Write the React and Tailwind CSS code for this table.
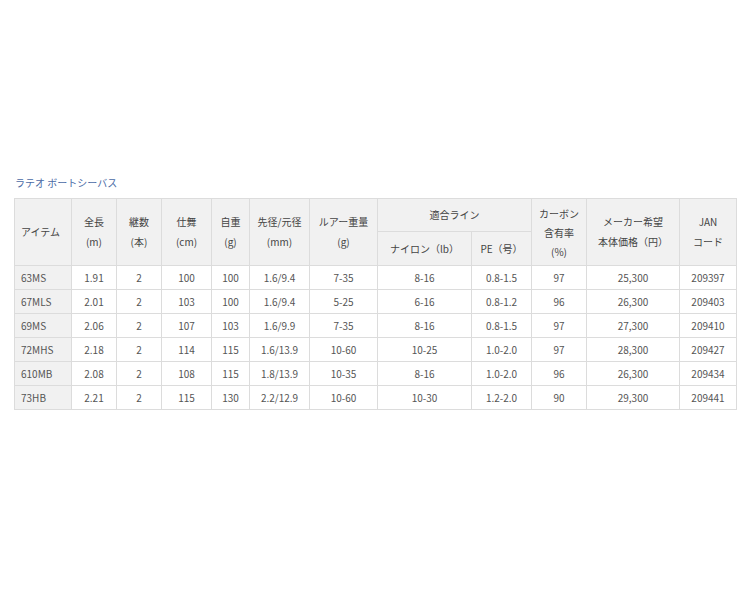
import React from 'react'

const rows = [
  ['63MS', '1.91', '2', '100', '100', '1.6/9.4', '7-35', '8-16', '0.8-1.5', '97', '25,300', '209397'],
  ['67MLS', '2.01', '2', '103', '100', '1.6/9.4', '5-25', '6-16', '0.8-1.2', '96', '26,300', '209403'],
  ['69MS', '2.06', '2', '107', '103', '1.6/9.9', '7-35', '8-16', '0.8-1.5', '97', '27,300', '209410'],
  ['72MHS', '2.18', '2', '114', '115', '1.6/13.9', '10-60', '10-25', '1.0-2.0', '97', '28,300', '209427'],
  ['610MB', '2.08', '2', '108', '115', '1.8/13.9', '10-35', '8-16', '1.0-2.0', '96', '26,300', '209434'],
  ['73HB', '2.21', '2', '115', '130', '2.2/12.9', '10-60', '10-30', '1.2-2.0', '90', '29,300', '209441'],
]

const widths = [57, 45, 45, 50, 38, 60, 68, 94, 60, 55, 93, 57]

const th = 'border border-[#dcdcdc] bg-[#f1f1f1] font-normal text-[#444] text-center align-middle px-1'

function App() {
  return (
    <div className="w-[750px] h-[600px] bg-white pt-[176px] pl-[14px] font-['Noto_Sans_CJK_JP','Noto_Sans',sans-serif]">
      <div className="text-[10px] leading-[14px] text-[#4a6aa5] mb-[8px] ml-[1px]">ラテオ ボートシーバス</div>
      <table className="border-collapse table-fixed w-[723px] text-[10px] leading-[20px]">
        <colgroup>
          {widths.map((w, i) => (
            <col key={i} style={{ width: w }} />
          ))}
        </colgroup>
        <thead>
          <tr className="h-[33px]">
            <th rowSpan={2} className={th + ' !text-left pl-[6px]'}>アイテム</th>
            <th rowSpan={2} className={th}>全長<br />(m)</th>
            <th rowSpan={2} className={th}>継数<br />(本)</th>
            <th rowSpan={2} className={th}>仕舞<br />(cm)</th>
            <th rowSpan={2} className={th}>自重<br />(g)</th>
            <th rowSpan={2} className={th}>先径/元径<br />(mm)</th>
            <th rowSpan={2} className={th}>ルアー重量<br />(g)</th>
            <th colSpan={2} className={th}>適合ライン</th>
            <th rowSpan={2} className={th + ' leading-[19px]'}>カーボン<br />含有率<br />(%)</th>
            <th rowSpan={2} className={th}>メーカー希望<br />本体価格（円）</th>
            <th rowSpan={2} className={th}>JAN<br />コード</th>
          </tr>
          <tr className="h-[34px]">
            <th className={th}>ナイロン（lb）</th>
            <th className={th}>PE（号）</th>
          </tr>
        </thead>
        <tbody>
          {rows.map((r) => (
            <tr key={r[0]} className="h-[24px]">
              {r.map((c, i) => (
                <td
                  key={i}
                  className={
                    i === 0
                      ? 'border border-[#dcdcdc] bg-[#f1f1f1] text-[#555] pl-[6px] text-left'
                      : 'border border-[#dcdcdc] bg-white text-[#555] text-center'
                  }
                >
                  {c}
                </td>
              ))}
            </tr>
          ))}
        </tbody>
      </table>
    </div>
  )
}

export default App
